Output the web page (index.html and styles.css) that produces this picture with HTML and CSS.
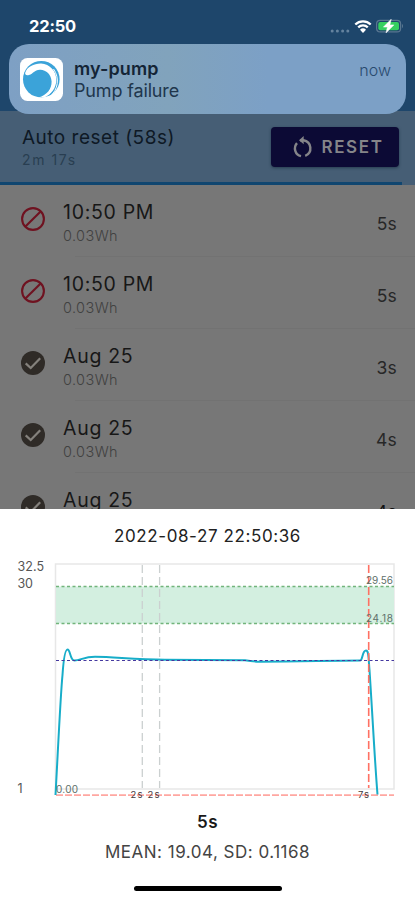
FILE: index.html
```html
<!DOCTYPE html>
<html lang="en">
<head>
<meta charset="utf-8">
<meta name="viewport" content="width=device-width, initial-scale=1">
<title>my-pump</title>
<link rel="stylesheet" href="styles.css">
</head>
<body>
<svg class="defs" width="0" height="0" aria-hidden="true">
  <symbol id="ban" viewBox="0 0 24 24"><circle cx="12" cy="12" r="10.9"/><path d="M4.4 19.6 19.6 4.4"/></symbol>
  <symbol id="check" viewBox="0 0 24 24"><circle cx="12" cy="12" r="12"/><path class="check-mark" d="M4.700 12.400 9.700 17 19.200 7.300"/></symbol>
</svg>
<div class="phone">
  <header class="status">
    <span class="clock">22:50</span>
    <span class="indicators">
      <svg class="dots" width="20" height="4" viewBox="0 0 20 4"><circle cx="2.2" cy="2" r="1.5"/><circle cx="7.4" cy="2" r="1.5"/><circle cx="12.6" cy="2" r="1.5"/><circle cx="17.8" cy="2" r="1.5"/></svg>
      <svg class="wifi" width="18" height="13" viewBox="0 0 18 13"><path d="M1.3 4.5a11 11 0 0 1 15.4 0"/><path d="M4.2 7.4a6.9 6.9 0 0 1 9.6 0"/><path class="fill" d="M6 9.8a4.3 4.3 0 0 1 6 0L9 12.9z"/></svg>
      <svg class="battery" width="28" height="14" viewBox="0 0 28 14"><rect class="shell" x=".6" y="1.3" width="24" height="11.6" rx="3.5"/><rect class="charge" x="2.3" y="2.9" width="20.7" height="8.4" rx="2"/><path class="tip" d="M26 5c1.4.5 1.4 3.6 0 4.2z"/><path class="bolt" d="M15.200.2 7.400 8.100h4L10 13.900 17.900 5.900h-4z"/></svg>
    </span>
  </header>

  <section class="reset-bar">
    <div class="text">
      <div class="title">Auto reset (58s)</div>
      <div class="sub">2m 17s</div>
    </div>
    <button class="reset"><svg width="21" height="22" viewBox="0 0 21 22"><path d="M9 20.200A8 8 0 0 1 5 7.100M13.200 19.900A8.200 8.200 0 0 0 11.500 4.200H8"/><path class="head" d="M11.700 0V8.200L7 4.200z"/></svg><span>RESET</span></button>
  </section>
  <div class="progress"><div class="bar"></div></div>

  <main class="list">
    <div class="row"><svg class="ban"><use href="#ban"/></svg><div class="text"><div class="title">10:50 PM</div><div class="sub">0.03Wh</div></div><div class="time">5s</div></div>
    <div class="row"><svg class="ban"><use href="#ban"/></svg><div class="text"><div class="title">10:50 PM</div><div class="sub">0.03Wh</div></div><div class="time">5s</div></div>
    <div class="row"><svg class="check"><use href="#check"/></svg><div class="text"><div class="title">Aug 25</div><div class="sub">0.03Wh</div></div><div class="time">3s</div></div>
    <div class="row"><svg class="check"><use href="#check"/></svg><div class="text"><div class="title">Aug 25</div><div class="sub">0.03Wh</div></div><div class="time">4s</div></div>
    <div class="row"><svg class="check"><use href="#check"/></svg><div class="text"><div class="title">Aug 25</div></div><div class="time last">4s</div></div>
  </main>

  <section class="sheet">
    <h1>2022-08-27 22:50:36</h1>
    <svg class="chart" width="415" height="246" viewBox="0 557 415 246">
      <rect class="frame" x="55.500" y="564" width="338.500" height="225"/>
      <rect class="band" x="56" y="586.500" width="338" height="37"/>
      <path class="limit" d="M56 586.500H394M56 623.500H394"/>
      <path class="marker" d="M142.300 565V788M159.600 565V788"/>
      <path class="floor" d="M56 795.200H394"/>
      <path class="curve" d="M55.500 795C58 750 60.500 695 62.500 675C63.500 660 65 649.500 67.500 649.500C70.500 649.500 70 660.500 74.500 660.500C80 660.500 84 656.800 95 656.800C115 657 135 659.600 165 659.700L245 660.300Q252 661.700 260 661.700C300 661.700 330 660.500 360 660.500C363 660.500 362 650.500 366 650.500C369 650.500 368.500 660 369.500 670C372 707 375 765 377.500 794.500"/>
      <path class="mean" d="M56 660.500H394"/>
      <path class="stop" d="M368.700 565V788"/>
      <g class="axis"><text x="17.500" y="570.500" textLength="26.500">32.5</text><text x="17.500" y="588" textLength="15.500">30</text><text x="17.500" y="793">1</text></g>
      <g class="note"><text x="366" y="583.700" textLength="27">29.56</text><text x="366" y="622" textLength="27">24.18</text><text x="56" y="793.300" textLength="22">0.00</text></g>
      <g class="tick"><text x="130.500" y="798.300" textLength="12">2s</text><text x="147.500" y="798.300" textLength="12">2s</text><text x="358" y="798" textLength="11">7s</text></g>
    </svg>
    <div class="duration">5s</div>
    <div class="stats">MEAN: 19.04, SD: 0.1168</div>
    <div class="home"></div>
  </section>

  <aside class="notification">
    <svg class="app" width="43" height="43" viewBox="0 0 43 43"><rect width="43" height="43" rx="7.500"/><circle class="disc" cx="21.300" cy="21.200" r="18.300"/><path class="sweep" d="M5.200 14.800C7 9 14 5.500 21 5.600C30 6 36.500 13.500 36.300 22C36.200 30 31.500 36 24.500 39.500L18.500 39.600C27 37 31.800 31 31.600 23.500C31.300 16.500 26 11.500 20 11.700C14 12 13.500 15.500 9 17C6.500 17.800 4.700 16.800 5.200 14.800Z"/><path class="trail" d="M3 27C5 34 10 39 17 41M33.500 11C40 20 38 32 30 38.500"/></svg>
    <div class="message"><div class="name">my-pump</div><div class="body">Pump failure</div></div>
    <div class="when">now</div>
  </aside>
</div>
</body>
</html>
```
FILE: styles.css
```css
* { box-sizing: border-box; }
body { margin: 0; background: #fff; font-family: Inter, "Liberation Sans", sans-serif; }
.defs { display: block; }
.phone { position: relative; width: 415px; height: 900px; overflow: hidden; display: flex; flex-direction: column; background: #777; }

.status { height: 111px; flex: none; padding: 16px 13px 0 29px; display: flex; justify-content: space-between; align-items: flex-start; background: #1e466b; color: #fff; }
.clock { font-size: 16.500px; line-height: 20px; font-weight: 700; letter-spacing: -.2px; }
.indicators { display: flex; align-items: center; padding-top: 3px; }
.dots { fill: #65839f; margin: 9px 4px 0 0; }
.wifi { fill: none; stroke: #fff; stroke-width: 2.300; margin-right: 4px; }
.wifi .fill { fill: #fff; stroke: none; }
.shell { fill: none; stroke: #597791; stroke-width: 1.200; }
.charge { fill: #35cf60; }
.tip { fill: #597791; }
.bolt { fill: #fff; stroke: #fff; stroke-width: .5; }
.battery { margin-right: -2px; }

.notification { position: absolute; left: 9px; top: 44px; width: 397px; height: 70px; border-radius: 20px; padding: 14px 15px 0 11px; display: flex; align-items: flex-start; background: linear-gradient(90deg, #7ea0c4, #81a3bc 40%, #7ca0c6 65%); }
.app { fill: #fff; flex: none; }
.app .disc { fill: #3ba3d9; }
.app .trail { fill: none; stroke: #fff; stroke-width: 1; }
.message { margin: 0 auto 0 11px; }
.name { font-size: 18px; line-height: 22px; font-weight: 600; letter-spacing: .1px; color: #142536; }
.body { font-size: 18px; line-height: 22px; letter-spacing: -.15px; color: #20364c; }
.when { margin-top: 2px; font-size: 16px; line-height: 20px; font-weight: 300; color: #294a6e; }

.reset-bar { height: 71px; flex: none; padding: 15px 16px 0 22px; display: flex; justify-content: space-between; align-items: flex-start; background: #465e75; }
.title { font-size: 19.500px; line-height: 24px; letter-spacing: .7px; color: #171717; white-space: nowrap; }
.row .title { padding-top: 1px; }
.reset-bar .title { font-size: 19px; letter-spacing: .5px; color: #0e1925; }
.reset-bar .sub { font-size: 14px; line-height: 20px; letter-spacing: 1.600px; color: #293e51; }
.reset { margin: 1px 0 0; width: 128px; height: 40px; border: 0; border-radius: 4px; padding: 0 0 0 5px; display: flex; align-items: center; justify-content: center; gap: 9px; background: #0c0a35; color: #858589; font: 600 17px/20px Inter, "Liberation Sans", sans-serif; letter-spacing: 1.600px; box-shadow: 0 1px 3px #0d203088; }
.reset svg { fill: none; stroke: currentColor; stroke-width: 2.400; }
.reset .head { fill: currentColor; stroke: none; }
.progress { height: 3px; flex: none; background: #465e75; }
.bar { width: 402px; height: 3px; background: #104670; }

.list { flex: 1; min-height: 0; overflow: hidden; }
.row { height: 72px; padding: 14px 18px 0 21px; display: flex; align-items: flex-start; background: linear-gradient(#727272, #727272) 75px 100% / 340px 1px no-repeat; }
.row svg { width: 24px; height: 24px; margin: 8px 18px 0 0; flex: none; }
.ban { fill: none; stroke: #6f1220; stroke-width: 2.100; }
.check { fill: #2f2b27; }
.check-mark { fill: none; stroke: #84817c; stroke-width: 2.200; }
.row .text { flex: 1; }
.row .sub { margin-top: 1px; font-size: 14.500px; line-height: 22px; font-weight: 300; letter-spacing: .4px; color: #414141; }
.time { margin-top: 14px; font-size: 17.500px; line-height: 22px; letter-spacing: .2px; color: #272727; }
.time.last { color: #111; }

.sheet { flex: none; height: 391.500px; background: #fff; display: flex; flex-direction: column; align-items: center; }
h1 { margin: 16.500px 0 0; height: 32px; font-size: 17px; line-height: 22px; font-weight: 400; letter-spacing: .6px; color: #222; white-space: nowrap; }
.chart { display: block; flex: none; }
.chart path { fill: none; }
.frame { fill: none; stroke: #e7e7e7; stroke-width: 1.500; }
.band { fill: #d3efe0; }
.limit { stroke: #72b47b; stroke-width: 1.300; stroke-dasharray: 3 2.500; }
.marker { stroke: #cbd0d0; stroke-width: 1.300; stroke-dasharray: 8 4; }
.floor { stroke: #ffa7a1; stroke-width: 1.800; stroke-dasharray: 7 2; }
.curve { stroke: #17adc9; stroke-width: 2; }
.mean { stroke: #4538a0; stroke-width: 1.200; stroke-dasharray: 3 2.500; }
.stop { stroke: #ff7163; stroke-width: 1.600; stroke-dasharray: 8 3; }
.axis { font-size: 12.500px; fill: #555; }
.note { font-size: 10px; fill: #60706a; }
.tick { font-size: 9.500px; fill: #47383a; }
.duration { margin-top: 8px; font-size: 17px; line-height: 22px; font-weight: 600; letter-spacing: .5px; color: #191919; }
.stats { margin-top: 8px; font-size: 17px; line-height: 22px; letter-spacing: .5px; color: #444; white-space: nowrap; }
.home { margin-top: 23px; width: 148px; height: 5px; border-radius: 3px; background: #000; }
```
